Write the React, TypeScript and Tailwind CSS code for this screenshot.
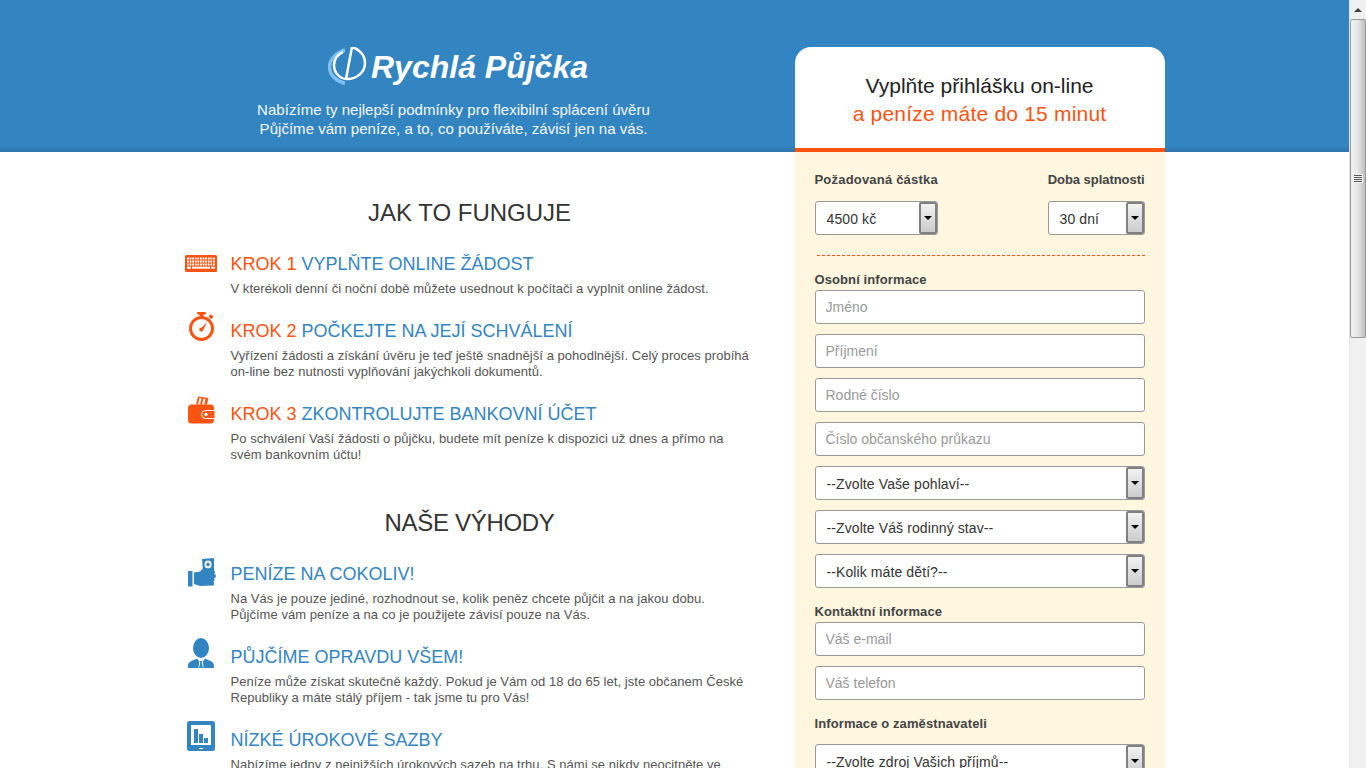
import React from "react";

const font = { fontFamily: '"Liberation Sans", Arial, sans-serif' };

function Keyboard() {
  const cells: React.ReactNode[] = [];
  [0, 1, 2].forEach((r) => {
    for (let c = 0; c < 11; c++) {
      cells.push(<rect key={`${r}-${c}`} x={2 + c * 2.6} y={2.5 + r * 3} width="1.8" height="2" fill="#fff" />);
    }
  });
  return (
    <svg width="32" height="17" viewBox="0 0 32 17" className="mt-[3px]">
      <rect width="32" height="17" rx="1.500" fill="#f95411" />
      {cells}
      <rect x="2" y="11.700" width="4" height="2" fill="#fff" />
      <rect x="7" y="11.700" width="18" height="2" fill="#fff" />
      <rect x="26" y="11.700" width="4" height="2" fill="#fff" />
    </svg>
  );
}

function Stopwatch() {
  return (
    <svg width="32" height="30" viewBox="0 0 32 30" className="-mt-[7px]">
      <circle cx="16.500" cy="16.500" r="11" fill="none" stroke="#f95411" strokeWidth="3" />
      <rect x="12" y="0" width="9" height="2.500" rx="1" fill="#f95411" />
      <rect x="14.500" y="2" width="4" height="3" fill="#f95411" />
      <rect x="24" y="3" width="4" height="3.500" rx="0.800" transform="rotate(40 26 4.700)" fill="#f95411" />
      <path d="M15 17.500 L22 10 L18 18.500 Z" fill="#f95411" />
      <circle cx="16.300" cy="17.500" r="2" fill="#f95411" />
    </svg>
  );
}

function Wallet() {
  return (
    <svg width="32" height="28" viewBox="0 0 32 28" className="-mt-[6px]">
      <path d="M11 8.500 L13 0.500 L23.500 2 L22 8.500 Z" fill="#f95411" />
      <path d="M13 8.500 L14.500 2 L16.500 2.300 L15 8.500 Z M17 8.500 L18.300 2.700 L20.500 3 L19.200 8.500 Z" fill="#fff" />
      <rect x="3" y="8.500" width="26" height="19" rx="3.500" fill="#f95411" />
      <path d="M20.500 14.500 H30 V22.500 H20.500 a4 4 0 0 1 0 -8 Z" fill="#f95411" stroke="#fff" strokeWidth="1" />
      <circle cx="21" cy="18.500" r="1.700" fill="#fff" />
    </svg>
  );
}

function Hand() {
  return (
    <svg width="32" height="31" viewBox="0 0 32 31" className="-mt-[4px]">
      <path d="M17 1 L29 0 L29 13 L18 13 Z" fill="#3385c1" />
      <ellipse cx="23" cy="6.500" rx="3.500" ry="4" fill="#fff" />
      <ellipse cx="23" cy="6.500" rx="1.600" ry="1.900" fill="#3385c1" />
      <rect x="3" y="13" width="4.500" height="15.500" fill="#3385c1" />
      <path d="M9 14.500 L15 13.500 L18 10.500 L27 10.500 a1.800 1.800 0 0 1 2 2 a2 2 0 0 1 0 3.500 a2 2 0 0 1 0 4 a2 2 0 0 1 -1 3.500 a2 2 0 0 1 -2 4 L15 28 L9 26 Z" fill="#3385c1" />
    </svg>
  );
}

function Person() {
  return (
    <svg width="32" height="32" viewBox="0 0 32 32" className="-mt-[8px]">
      <ellipse cx="16" cy="11" rx="8" ry="10" fill="#3385c1" />
      <path d="M3 31 V28.500 C3 24.500 8 23.500 12 21.500 L14.200 24.500 L13.500 31 Z M29 31 V28.500 C29 24.500 24 23.500 20 21.500 L17.800 24.500 L18.500 31 Z" fill="#3385c1" />
      <path d="M14.800 24 H17.200 L16.800 26 L18 31 H14 L15.200 26 Z" fill="#3385c1" />
    </svg>
  );
}

function Tablet() {
  return (
    <svg width="32" height="30" viewBox="0 0 32 30" className="-mt-[7px]">
      <rect x="2" y="0" width="28" height="30" rx="2.500" fill="#3385c1" />
      <rect x="6" y="4" width="20" height="20" fill="#fff" />
      <rect x="9" y="8" width="4" height="14" fill="#3385c1" />
      <rect x="14" y="13" width="4" height="9" fill="#3385c1" />
      <rect x="19" y="17" width="4" height="5" fill="#3385c1" />
      <rect x="14" y="27" width="4" height="1" fill="#fff" />
    </svg>
  );
}

function Step({ icon, krok, title, text }: { icon: React.ReactNode; krok?: string; title: string; text: React.ReactNode }) {
  return (
    <div className="flex mb-[22px]">
      <div className="w-[46px] shrink-0">{icon}</div>
      <div className="flex-1 pr-[3px]">
        <h3 className="text-[18px] leading-[24px] text-[#3385c1] uppercase font-normal">
          {krok && <span className="text-[#f95411]">{krok} </span>}
          {title}
        </h3>
        <p className="mt-[5px] text-[13px] leading-[16px] tracking-[0.04px] text-[#555555]">{text}</p>
      </div>
    </div>
  );
}

function Select({ label, w }: { label: string; w: string }) {
  return (
    <div className={`${w} h-[34px] flex items-stretch rounded-[3px] border border-[#999999] bg-white text-[14px] text-[#333333]`}>
      <div className="flex-1 flex items-center pl-[11px] pt-[2px] tracking-[0.1px] whitespace-nowrap overflow-hidden">{label}</div>
      <div className="w-[18px] shrink-0 flex items-center justify-center border-2 border-[#808080] rounded-[2px] bg-gradient-to-b from-[#f2f2f2] to-[#cccccc]">
        <span className="block w-0 h-0 border-x-[4px] border-x-transparent border-t-[4px] border-t-black" />
      </div>
    </div>
  );
}

function Field({ placeholder }: { placeholder: string }) {
  return (
    <input
      readOnly
      placeholder={placeholder}
      className="block w-full h-[34px] rounded-[3px] border border-[#999999] bg-white px-[10px] text-[14px] text-[#333333] placeholder:text-[#999999] outline-none"
      style={font}
    />
  );
}

function SectionLabel({ children, className = "" }: { children: React.ReactNode; className?: string }) {
  return <div className={`text-[13px] leading-[16px] font-bold text-[#444444] ${className}`}>{children}</div>;
}

function Scrollbar() {
  return (
    <div className="w-[17px] shrink-0 h-full bg-[#f0f0f0] flex flex-col border-l border-[#e4e4e4]">
      <div className="h-[19px] flex items-center justify-center">
        <span className="block w-0 h-0 border-x-[4px] border-x-transparent border-b-[4px] border-b-[#404040]" />
      </div>
      <div className="h-[319px] rounded-[2px] border border-[#9a9a9a] bg-gradient-to-r from-[#f2f2f2] via-[#e6e6e6] to-[#bdbdbd] flex items-center justify-center">
        <div className="flex flex-col gap-[1px] px-[1px] py-[1px] bg-[#f2f2f2]">
          <span className="block w-[8px] h-[1px] bg-[#555555]" />
          <span className="block w-[8px] h-[1px] bg-[#555555]" />
          <span className="block w-[8px] h-[1px] bg-[#555555]" />
          <span className="block w-[8px] h-[1px] bg-[#555555]" />
        </div>
      </div>
    </div>
  );
}

export default function App() {
  return (
    <div className="flex h-[768px] overflow-hidden bg-white" style={font}>
      <div className="flex-1 min-w-0 overflow-hidden">
        <header className="h-[152px] bg-[linear-gradient(to_bottom,#3385c1_0,#3385c1_146px,#2c74a8_152px)]">
          <div className="w-[980px] mx-auto pr-[442px] pt-[47px] text-center">
            <div className="flex items-center justify-center gap-[1px] pl-[9px]">
              <svg width="42" height="40" viewBox="0 0 42 40">
                <path d="M17 3 C8 6 1.500 12 1.500 20 C1.500 28 8 34 17 36.500" fill="none" stroke="#7fc0f3" strokeWidth="3.500" />
                <path d="M15 5 C9 8 6 13 6 18 C6 26 12 32 19 32 C29 32 37 25 37 16 C37 8 31 2 24 0 L18 32" fill="none" stroke="#fff" strokeWidth="2.500" />
              </svg>
              <h1 className="text-[32px] leading-[40px] font-bold italic text-white whitespace-nowrap">Rychlá Půjčka</h1>
            </div>
            <p className="mt-[13px] text-[15px] leading-[19px] tracking-[0.03px] text-[#f4f8fb]">
              Nabízíme ty nejlepší podmínky pro flexibilní splácení úvěru
              <br />
              Půjčíme vám peníze, a to, co používáte, závisí jen na vás.
            </p>
          </div>
        </header>

        <div className="w-[980px] mx-auto flex items-start gap-[40px]">
          <main className="w-[570px] shrink-0 pt-[46px]">
            <h2 className="text-[24px] leading-[30px] font-normal text-[#333333] text-center uppercase mb-[24px]">Jak to funguje</h2>
            <Step
              icon={<Keyboard />}
              krok="Krok 1"
              title="Vyplňte online žádost"
              text="V kterékoli denní či noční době můžete usednout k počítači a vyplnit online žádost."
            />
            <Step
              icon={<Stopwatch />}
              krok="Krok 2"
              title="Počkejte na její schválení"
              text="Vyřízení žádosti a získání úvěru je teď ještě snadnější a pohodlnější. Celý proces probíhá on-line bez nutnosti vyplňování jakýchkoli dokumentů."
            />
            <Step
              icon={<Wallet />}
              krok="Krok 3"
              title="Zkontrolujte bankovní účet"
              text="Po schválení Vaší žádosti o půjčku, budete mít peníze k dispozici už dnes a přímo na svém bankovním účtu!"
            />
            <h2 className="mt-[45px] text-[24px] leading-[30px] font-normal text-[#333333] text-center uppercase tracking-[-0.3px] mb-[24px]">Naše výhody</h2>
            <Step
              icon={<Hand />}
              title="Peníze na cokoliv!"
              text="Na Vás je pouze jediné, rozhodnout se, kolik peněz chcete půjčit a na jakou dobu. Půjčíme vám peníze a na co je použijete závisí pouze na Vás."
            />
            <Step
              icon={<Person />}
              title="Půjčíme opravdu všem!"
              text="Peníze může získat skutečně každý. Pokud je Vám od 18 do 65 let, jste občanem České Republiky a máte stálý příjem - tak jsme tu pro Vás!"
            />
            <Step
              icon={<Tablet />}
              title="Nízké úrokové sazby"
              text="Nabízíme jedny z nejnižších úrokových sazeb na trhu. S námi se nikdy neocitněte ve"
            />
          </main>

          <aside className="w-[370px] shrink-0 -mt-[105px] relative">
            <div className="h-[105px] bg-white rounded-t-[16px] border-b-4 border-[#f95411] pt-[25px] text-center text-[21px] leading-[28px]">
              <div className="text-[#222222]">Vyplňte přihlášku on-line</div>
              <div className="text-[#f95411] tracking-[0.2px]">a peníze máte do 15 minut</div>
            </div>
            <div className="bg-[#fff6e0] px-[20px] pt-[20px] pb-[40px]">
              <div className="flex justify-between">
                <div>
                  <SectionLabel className="tracking-[0.2px]">Požadovaná částka</SectionLabel>
                  <div className="mt-[13px]"><Select label="4500 kč" w="w-[123px]" /></div>
                </div>
                <div className="w-[97px]">
                  <SectionLabel className="whitespace-nowrap flex justify-end tracking-[-0.05px]">Doba splatnosti</SectionLabel>
                  <div className="mt-[13px]"><Select label="30 dní" w="w-[97px]" /></div>
                </div>
              </div>
              <div className="mt-[20px] ml-[2px] border-t border-dashed border-[#f95411]" />
              <SectionLabel className="mt-[16px] mb-[2px] tracking-[0.1px]">Osobní informace</SectionLabel>
              <div className="flex flex-col gap-[10px]">
                <Field placeholder="Jméno" />
                <Field placeholder="Příjmení" />
                <Field placeholder="Rodné číslo" />
                <Field placeholder="Číslo občanského průkazu" />
                <Select label="--Zvolte Vaše pohlaví--" w="w-full" />
                <Select label="--Zvolte Váš rodinný stav--" w="w-full" />
                <Select label="--Kolik máte dětí?--" w="w-full" />
              </div>
              <SectionLabel className="mt-[16px] mb-[2px] tracking-[0.1px]">Kontaktní informace</SectionLabel>
              <div className="flex flex-col gap-[10px]">
                <Field placeholder="Váš e-mail" />
                <Field placeholder="Váš telefon" />
              </div>
              <SectionLabel className="mt-[16px] mb-[12px] tracking-[0.1px]">Informace o zaměstnavateli</SectionLabel>
              <Select label="--Zvolte zdroj Vašich příjmů--" w="w-full" />
            </div>
          </aside>
        </div>
      </div>
      <Scrollbar />
    </div>
  );
}
